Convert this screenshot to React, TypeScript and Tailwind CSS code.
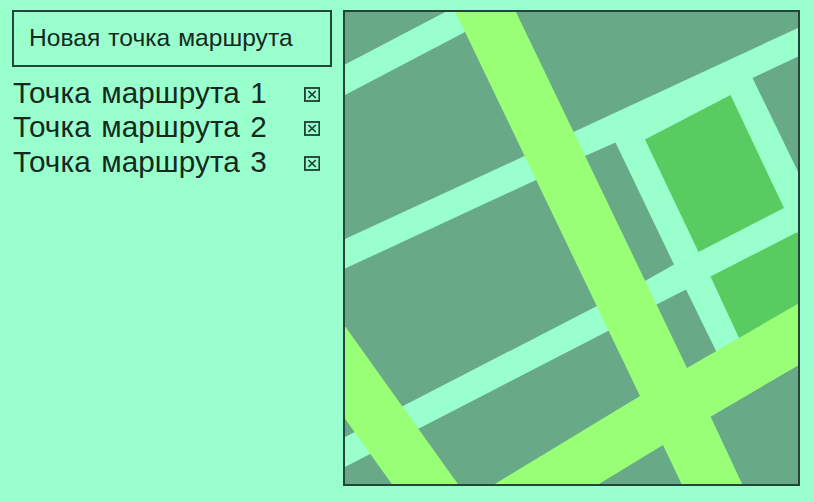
import { useState } from "react";

const initialPoints = ["Точка маршрута 1", "Точка маршрута 2", "Точка маршрута 3"];

const blocks = [
  "343,9 451,9 343,65.5",
  "343,96 465,32 475,32 534,152 524.5,156 343,240",
  "505,9 801,9 801,26.5 573.5,132 563,132",
  "575,160 585,156 615.5,142.5 674,264.5 645,281 635,285",
  "752.5,78 801,55 801,178",
  "343,269.5 536,180 546,176 607,301 597,306 403,406 393,406 343,340",
  "647,309 656.5,304.5 686,289.5 718,355 687,375",
  "608,331 618,326 655,400 500,487 440,487 409,433 419,428.5",
  "710.5,416.5 801,363.5 801,487 733,487 700,416",
  "590,487 663,440 693,487",
  "343,416 360,425 355,432 343,438",
  "343,468 371,453.5 381,449 400,487 343,487",
];

const parks = [
  "645,139.5 730.5,95 784,208 698.5,252",
  "710.5,276.5 796.5,232.5 801,233 801,308 739.5,339",
];

const avenues = [
  "454,9 514.5,9 687,368 801,302 801,363.5 710.5,416.5 743.5,487 683,487 663,445 594,487 490,487 640,396",
  "343,323.5 460,487 394,487 343,416",
];

function CityMap() {
  return (
    <svg className="block h-full w-full" viewBox="345 12 453 472" aria-hidden="true">
      <rect x="343" y="9" width="458" height="478" fill="#99ffcc" />
      {blocks.map((p) => (
        <polygon key={p} points={p} fill="#68aa88" />
      ))}
      {parks.map((p) => (
        <polygon key={p} points={p} fill="#58cc60" />
      ))}
      {avenues.map((p) => (
        <polygon key={p} points={p} fill="#99ff77" />
      ))}
    </svg>
  );
}

function RemoveIcon() {
  return (
    <svg className="mt-[3px] block h-4 w-4" viewBox="0 0 16 16" fill="none" stroke="#1c3f30">
      <rect x="0.9" y="1" width="14.4" height="13" strokeWidth="1.8" />
      <path d="M4.4 4 11.8 11 M11.8 4 4.4 11" strokeWidth="1.7" />
    </svg>
  );
}

export default function App() {
  const [points, setPoints] = useState(initialPoints);

  return (
    <div className="flex h-[502px] w-[814px] gap-[11px] overflow-hidden bg-[#99ffcc] pt-[10px] pl-3 font-['Liberation_Sans',Arial,sans-serif] text-[#15291f]">
      <div className="w-[320px]">
        <div className="flex h-[57px] items-center border-2 border-[#25453a] pl-[15px] text-[24.6px] [word-spacing:1.2px] whitespace-nowrap">
          Новая точка маршрута
        </div>
        <ul className="pt-[9px]">
          {points.map((point) => (
            <li key={point} className="flex h-[34.5px] items-center justify-between pr-3 pl-px text-[29.7px] tracking-[0.1px] [word-spacing:2px] whitespace-nowrap">
              <span>{point}</span>
              <button aria-label="Удалить" onClick={() => setPoints(points.filter((p) => p !== point))}>
                <RemoveIcon />
              </button>
            </li>
          ))}
        </ul>
      </div>
      <div className="h-[476px] w-[457px] border-2 border-[#25453a]">
        <CityMap />
      </div>
    </div>
  );
}
